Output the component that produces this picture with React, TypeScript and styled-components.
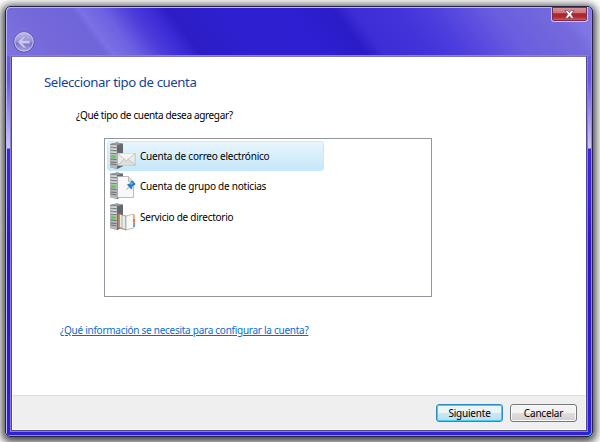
import React from 'react';
import styled, { createGlobalStyle } from 'styled-components';

const GlobalStyle = createGlobalStyle`
  * { box-sizing: border-box; }
  html, body { margin: 0; background: #fff; overflow: hidden; }
  body { font-family: "Noto Sans", "Open Sans", sans-serif; font-size: 10px; color: #000; }
`;

const Desktop = styled.main`
  width: 600px;
  height: 442px;
  padding: 6px 7px 5px 5px;
  display: flex;
  overflow: hidden;
`;

const Window = styled.section`
  flex: 1;
  display: flex;
  flex-direction: column;
  border: 1px solid #242443;
  border-radius: 5px;
  padding: 0 5px 5px;
  box-shadow: 0 2px 9px 3px rgba(0, 0, 0, 0.75),
    inset 1px 1px 0 #b9b3ff, inset -1px -1px 0 #35b5f5;
  background:
    linear-gradient(53deg, #7f74e0 0, #7468da 45px, #7064da 79px, #7b70e5 86px, #6e61e2 104px, #4c3cda 126px, #3c2bd6 143px, #2c1dc6 156px, #2e20d0 200px, #2e20d2 250px, #2b1cc8 288px, #3d2dd6 303px, #4132d9 335px, #4c3ddd 365px, #6a5de0 415px, #756adb 464px, #8075e4 476px, #857ae8 498px) 1px 1px / calc(100% - 2px) 48px no-repeat,
    linear-gradient(#7568df 0, #6a59e0 73px, #d0c8f3 141px, #3b26db 142px, #3a21e0 190px, #2b13cc 240px, #3020d6 100%);
`;

const TitleBar = styled.header`
  height: 49px;
  flex: none;
  display: flex;
  justify-content: space-between;
`;

const BackButton = styled.button`
  width: 22px;
  height: 22px;
  margin: 24px 0 0 2px;
  padding: 0;
  border: 0;
  background: none;
`;

const CloseButton = styled.button`
  width: 37px;
  height: 15px;
  margin-right: -1px;
  padding: 0;
  display: flex;
  align-items: center;
  justify-content: center;
  border: 1px solid #d7b8dc;
  border-top: 0;
  border-radius: 0 0 3px 3px;
  background: linear-gradient(#d99a9f 0, #cc7378 42%, #ac2428 48%, #b22b30 72%, #d66a70 100%);
  box-shadow: inset 0 0 0 1px #7b3050;
`;

const Client = styled.div`
  flex: 1;
  min-height: 0;
  display: flex;
  flex-direction: column;
  border: 1px solid #51498f;
  border-top-color: #7d76ab;
  box-shadow: 0 0 0 1px #8b82cd;
  background: #fff;
`;

const Content = styled.div`
  flex: 1;
  display: flex;
  flex-direction: column;
  align-items: flex-start;
`;

const Title = styled.h1`
  margin: 15px 0 0 32px;
  font-size: 13.2px;
  line-height: 20px;
  font-weight: 400;
  color: #174299;
  white-space: nowrap;
`;

const Question = styled.p`
  margin: 15px 0 0 64px;
  line-height: 16px;
  white-space: nowrap;
`;

const AccountList = styled.div`
  width: 328px;
  height: 159px;
  margin: 15px 0 0 92px;
  padding: 2px;
  border: 1px solid #92969e;
  display: flex;
  flex-direction: column;
  gap: 0.4px;
`;

const AccountRow = styled.div<{ $selected?: boolean }>`
  width: 217px;
  height: 30px;
  display: flex;
  align-items: center;
  gap: 4px;
  padding: 0 0 0 1px;
  border: 1px solid ${p => (p.$selected ? '#c6eafa' : 'transparent')};
  border-radius: 3px;
  background: ${p => (p.$selected ? 'linear-gradient(#e9f6fd, #c4e8fa)' : 'none')};
  white-space: nowrap;
`;

const HelpLink = styled.a`
  margin: 25px 0 0 48px;
  line-height: 16px;
  color: #0b6bd0;
  text-decoration: underline;
  white-space: nowrap;
`;

const Footer = styled.footer`
  height: 35px;
  flex: none;
  display: flex;
  justify-content: flex-end;
  align-items: center;
  gap: 7px;
  padding: 0 8px 0 0;
  background: #efefef;
  border: 1px solid #fafafa;
  border-top-color: #dfdfdf;
`;

const Button = styled.button<{ $primary?: boolean }>`
  width: 67px;
  height: 18px;
  padding: 0;
  font: inherit;
  line-height: 14px;
  letter-spacing: -0.2px;
  color: #000;
  border: 1px solid ${p => (p.$primary ? '#2a8dbb' : '#787878')};
  border-radius: 3px;
  background: ${p => p.$primary
    ? 'linear-gradient(#eaf5fa 0 48%, #cce7f3 52%, #b9deef)'
    : 'linear-gradient(#f3f3f3 0 48%, #dedede 52%, #d0d0d0)'};
  box-shadow: inset 0 0 0 1px ${p => (p.$primary ? '#42cdf6' : '#fafafa')};
`;

const Label = styled.span<{ $spacing: number }>`
  letter-spacing: ${p => p.$spacing}px;
`;

function Server() {
  return (
    <g>
      <path d="m1 2 7-1.5 6 1.2V24l-6 3-7-2Z" fill="#696d6f" />
      <path d="M1 2.5 8 3v24l-7-2Z" fill="#b5b8ba" />
      <path d="m8 3 6-1.3V24l-6 3Z" fill="#64686b" />
      <path d="m1 2 7-1.5 6 1.2L8 3Z" fill="#96999b" />
      <path d="m1.5 5 6 .4m-6 2.6 6 .4m-6 2.6 6 .4m-6 5.6 6 .5m-6 2.5 6 .6m-6 1.4 6 .8" stroke="#63686a" strokeWidth=".9" />
      <path d="m1.5 4 6 .4m-6 2.6 6 .4m-6 2.6 6 .4" stroke="#eceeee" strokeWidth=".9" />
      <path d="m2 14.5 4.5.3" stroke="#45d52e" strokeWidth="2" />
    </g>
  );
}

function AccountIcon({ kind }: { kind: 'mail' | 'news' | 'directory' }) {
  return (
    <svg width="27" height="28" viewBox="0 0 27 28" aria-hidden="true">
      <Server />
      {kind === 'mail' && (
        <g stroke="#b0b2b1" strokeWidth=".7">
          <path d="M8.5 11.5h17.7v11.8H8.5Z" fill="#ececea" />
          <path d="m8.5 23.3 7-6h3.8l6.9 6" fill="#dededc" />
          <path d="m8.5 11.5 8.8 7.3 8.9-7.3" fill="#f7f7f5" />
        </g>
      )}
      {kind === 'news' && (
        <g>
          <path d="M8.5 4.5h11l5 5v16h-16Z" fill="#f8f8f8" stroke="#a8aaab" strokeWidth=".8" />
          <path d="M19.5 4.5v5h5" fill="#ddd" stroke="#aaa" strokeWidth=".7" />
          <path d="m17.5 17.5 3-2.7" stroke="#7398b4" strokeWidth=".8" />
          <path d="m18.5 12 2-.2 2-2.8 1-.3 3 3-.3 1-2.9 1.8-.1 2.4-1 .3-3.8-4Z" fill="#237fc4" />
          <path d="m21 12 2-2 1 1-2 2" fill="#78bbe5" />
        </g>
      )}
      {kind === 'directory' && (
        <g>
          <path d="m9 11 8 2v14l-8-2.4Z" fill="#c4905c" stroke="#a78254" strokeWidth=".7" />
          <path d="m11 11.5 5.5 2v12.7L11 24Z" fill="#e5ece9" />
          <path d="M13 12v13" stroke="#91b0b9" strokeWidth=".8" />
          <path d="m17 13 7.5-2v14L17 27Z" fill="#f8f8f5" stroke="#a3a39e" strokeWidth=".7" />
          <path d="M25.2 12v3.5" stroke="#efb34b" strokeWidth="1.8" />
          <path d="M25.2 16v3.5" stroke="#de6553" strokeWidth="1.8" />
          <path d="M25.2 20v4" stroke="#689cbc" strokeWidth="1.8" />
        </g>
      )}
    </svg>
  );
}

function BackIcon() {
  return (
    <svg width="22" height="22" viewBox="0 0 22 22" aria-hidden="true">
      <defs>
        <linearGradient id="orb" x2="0" y2="1">
          <stop stopColor="#c4c0ea" />
          <stop offset=".48" stopColor="#9991d9" />
          <stop offset=".54" stopColor="#7970c4" />
          <stop offset="1" stopColor="#b0aae8" />
        </linearGradient>
      </defs>
      <circle cx="11" cy="11" r="10.2" fill="url(#orb)" stroke="#5d549f" strokeWidth=".9" />
      <circle cx="11" cy="10.7" r="9.2" fill="none" stroke="#c9c5ed" strokeWidth=".9" />
      <path d="m4.5 11 6-6h3.2l-4 4.3H17v3.4H9.7l4 4.3h-3.2Z" fill="#cbc7f1" stroke="#8982c5" strokeWidth=".6" />
    </svg>
  );
}

export default function App() {
  return (
    <>
      <GlobalStyle />
      <Desktop>
        <Window>
          <TitleBar>
            <BackButton aria-label="Atrás"><BackIcon /></BackButton>
            <CloseButton aria-label="Cerrar">
              <svg width="11" height="9" viewBox="0 0 11 9">
                <path d="M1 .6h3l1.5 2L7 .6h3L7.2 4.3 10 8.2H7L5.5 6.1 4 8.2H1l2.8-3.9Z" fill="#fff" stroke="#554555" strokeWidth=".7" />
              </svg>
            </CloseButton>
          </TitleBar>
          <Client>
            <Content>
              <Title><Label $spacing={-0.4}>Seleccionar tipo de cuenta</Label></Title>
              <Question><Label $spacing={-0.35}>¿Qué tipo de cuenta desea agregar?</Label></Question>
              <AccountList>
                <AccountRow $selected><AccountIcon kind="mail" /><Label $spacing={-0.22}>Cuenta de correo electrónico</Label></AccountRow>
                <AccountRow><AccountIcon kind="news" /><Label $spacing={-0.23}>Cuenta de grupo de noticias</Label></AccountRow>
                <AccountRow><AccountIcon kind="directory" /><Label $spacing={-0.25}>Servicio de directorio</Label></AccountRow>
              </AccountList>
              <HelpLink><Label $spacing={-0.27}>¿Qué información se necesita para configurar la cuenta?</Label></HelpLink>
            </Content>
            <Footer>
              <Button $primary>Siguiente</Button>
              <Button>Cancelar</Button>
            </Footer>
          </Client>
        </Window>
      </Desktop>
    </>
  );
}
